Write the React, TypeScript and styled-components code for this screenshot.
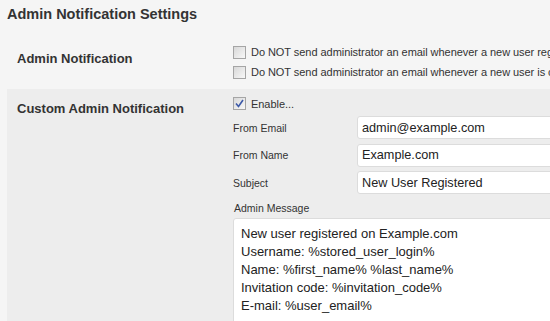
import styled, { createGlobalStyle } from "styled-components";

const GlobalStyle = createGlobalStyle`
  html, body {
    margin: 0;
    padding: 0;
    background: #f5f5f5;
    overflow: hidden;
  }
  body {
    font-family: "Liberation Sans", Arial, sans-serif;
    color: #333;
  }
`;

const Page = styled.div`
  width: 550px;
  height: 321px;
  padding: 0 0 0 7px;
  box-sizing: border-box;
  overflow: hidden;
`;

const Title = styled.h3`
  margin: 0;
  padding: 6px 0 0 0;
  height: 29px;
  box-sizing: border-box;
  font-size: 14.5px;
  font-weight: bold;
  color: #333;
`;

const Row = styled.div<{ $shaded?: boolean }>`
  display: flex;
  width: 700px;
  background: ${(p) => (p.$shaded ? "#ededed" : "transparent")};
  padding: ${(p) => (p.$shaded ? "4px 0 0 0" : "13px 0 7px 0")};
`;

const Label = styled.div<{ $top: number }>`
  width: 226px;
  flex: none;
  box-sizing: border-box;
  padding: ${(p) => p.$top}px 0 0 10px;
  font-size: 13px;
  line-height: 15px;
  font-weight: bold;
  color: #333;
`;

const Field = styled.div`
  display: flex;
  flex-direction: column;
  flex: 1;
`;

const CheckLine = styled.label<{ $h?: number }>`
  display: flex;
  align-items: center;
  gap: 5px;
  height: ${(p) => p.$h ?? 20}px;
  font-size: 11px;
  letter-spacing: -0.05px;
  color: #333;
  white-space: nowrap;
`;

const Box = styled.span`
  width: 11px;
  height: 11px;
  flex: none;
  border: 1px solid #a5a5a5;
  background: linear-gradient(135deg, #d8d8d8, #f8f8f8);
  display: flex;
  align-items: center;
  justify-content: center;
`;

const InputRow = styled.div`
  display: flex;
  align-items: center;
  height: 27.5px;
`;

const SmallLabel = styled.div`
  width: 124px;
  flex: none;
  font-size: 10.5px;
  color: #333;
`;

const TextInput = styled.div`
  width: 300px;
  height: 23px;
  box-sizing: border-box;
  background: #fff;
  border: 1px solid #dcdcdc;
  border-radius: 3px;
  padding: 0 0 0 4px;
  display: flex;
  align-items: center;
  font-size: 12.7px;
  color: #222;
`;

const MessageLabel = styled.div`
  font-size: 10.5px;
  line-height: 12px;
  color: #333;
  margin: 5.5px 0 4px 1px;
`;

const TextArea = styled.div`
  width: 400px;
  height: 120px;
  box-sizing: border-box;
  background: #fff;
  border: 1px solid #dcdcdc;
  border-radius: 3px;
  padding: 6px 0 0 7px;
  font-size: 13px;
  line-height: 18px;
  color: #222;
`;

function Check({ checked }: { checked?: boolean }) {
  return (
    <Box>
      {checked ? (
        <svg width="9" height="9" viewBox="0 0 9 9">
          <path d="M1 4.5 L3.5 7.5 L8 1" fill="none" stroke="#3c59a8" strokeWidth="1.6" />
        </svg>
      ) : null}
    </Box>
  );
}

const fields = [
  { label: "From Email", value: "admin@example.com" },
  { label: "From Name", value: "Example.com" },
  { label: "Subject", value: "New User Registered" },
];

const message = [
  "New user registered on Example.com",
  "Username: %stored_user_login%",
  "Name: %first_name% %last_name%",
  "Invitation code: %invitation_code%",
  "E-mail: %user_email%",
];

export default function App() {
  return (
    <Page>
      <GlobalStyle />
      <Title>Admin Notification Settings</Title>
      <Row>
        <Label $top={8.5}>Admin Notification</Label>
        <Field>
          <CheckLine>
            <Check /> Do NOT send administrator an email whenever a new user registers
          </CheckLine>
          <CheckLine>
            <Check /> Do NOT send administrator an email whenever a new user is created
          </CheckLine>
        </Field>
      </Row>
      <Row $shaded>
        <Label $top={7.5}>Custom Admin Notification</Label>
        <Field>
          <CheckLine $h={21}>
            <Check checked /> Enable...
          </CheckLine>
          {fields.map((f) => (
            <InputRow key={f.label}>
              <SmallLabel>{f.label}</SmallLabel>
              <TextInput>{f.value}</TextInput>
            </InputRow>
          ))}
          <MessageLabel>Admin Message</MessageLabel>
          <TextArea>
            {message.map((m) => (
              <div key={m}>{m}</div>
            ))}
          </TextArea>
        </Field>
      </Row>
    </Page>
  );
}
